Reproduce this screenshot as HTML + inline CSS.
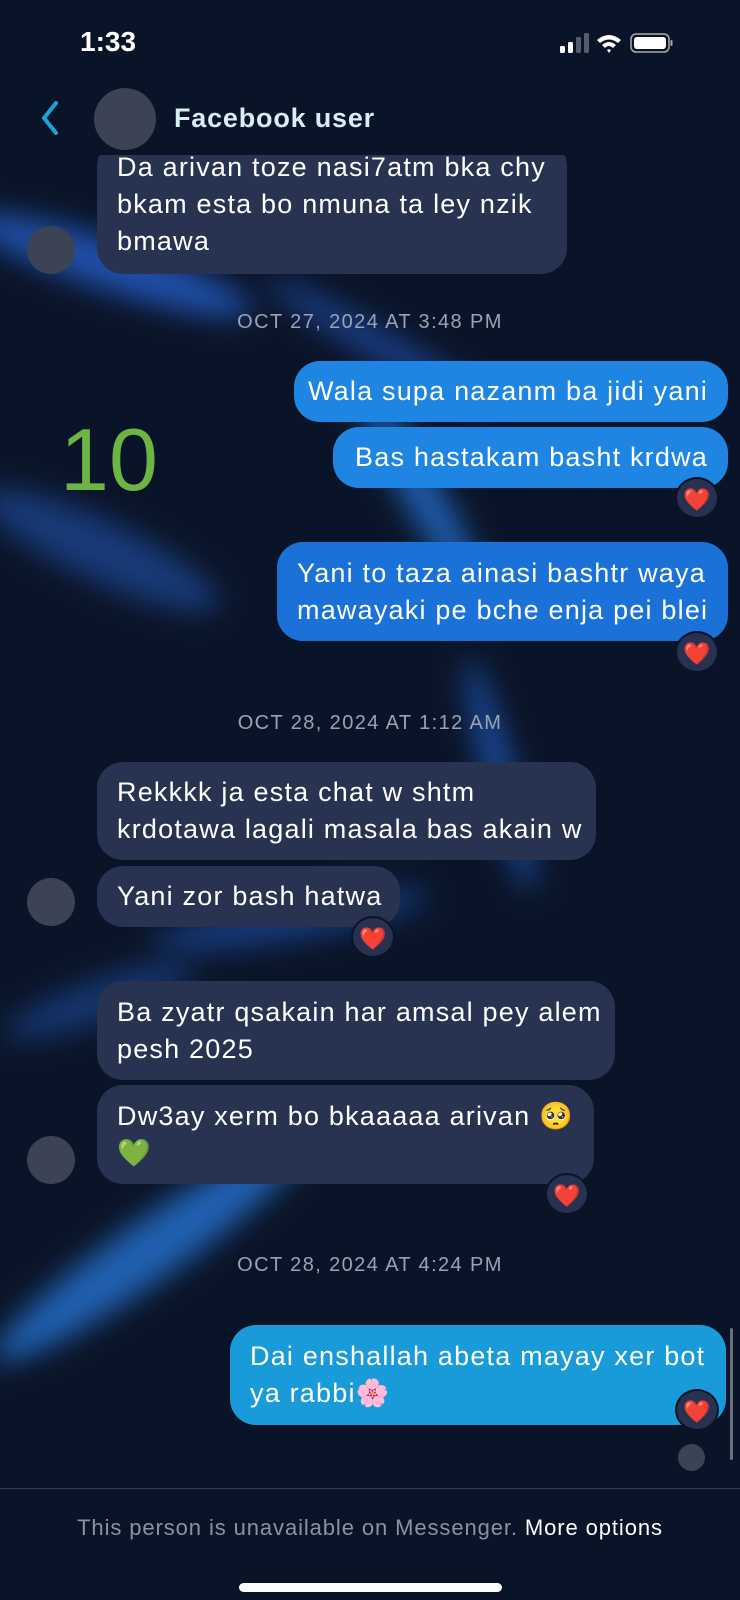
<!DOCTYPE html>
<html><head><meta charset="utf-8"><style>
*{margin:0;padding:0;box-sizing:border-box}
body{width:740px;height:1600px;overflow:hidden;background:#0a1428;font-family:"Liberation Sans",sans-serif;position:relative}
.bg{position:absolute;inset:0;overflow:hidden}
.s{position:absolute;border-radius:50%;filter:blur(14px)}
.a{position:absolute}
.b{position:absolute;border-radius:26px;color:#fff;font-size:27px;letter-spacing:1.2px;line-height:37px;padding:0 20px;display:flex;flex-direction:column;justify-content:center;white-space:nowrap}
.r{background:#273350}
.sb{background:#1e86e2}
.h{position:absolute;width:44px;height:42px;border-radius:50%;background:#263250;color:#e8222c;font-size:22px;text-align:center;line-height:42px;border:2px solid #0a1428;letter-spacing:0}
.av{position:absolute;width:48px;height:48px;border-radius:50%;background:#3b4354}
.ts{position:absolute;left:0;width:740px;text-align:center;color:#9aa3b3;font-size:20px;letter-spacing:1.4px}
</style></head><body>
<div class="bg">
<div class="s" style="left:-40px;top:240px;width:300px;height:50px;background:#1f4fa8;transform:rotate(18deg)"></div>
<div class="s" style="left:250px;top:330px;width:260px;height:30px;background:#1b3d86;transform:rotate(30deg)"></div>
<div class="s" style="left:300px;top:470px;width:240px;height:40px;background:#1f5aa8;transform:rotate(60deg)"></div>
<div class="s" style="left:-30px;top:520px;width:260px;height:60px;background:#183a78;transform:rotate(25deg)"></div>
<div class="s" style="left:380px;top:760px;width:240px;height:30px;background:#1a4a98;transform:rotate(75deg)"></div>
<div class="s" style="left:150px;top:900px;width:280px;height:40px;background:#173a7c;transform:rotate(-10deg)"></div>
<div class="s" style="left:-40px;top:1220px;width:380px;height:60px;background:#2060b0;transform:rotate(-35deg)"></div>
<div class="s" style="left:0;top:980px;width:200px;height:40px;background:#163670;transform:rotate(-20deg)"></div>
</div>

<div class="a" style="left:80px;top:26px;color:#fff;font-size:28px;font-weight:bold">1:33</div>
<svg class="a" style="left:560px;top:32px" width="135" height="22" viewBox="0 0 135 22">
<rect x="0" y="14" width="5" height="7" rx="1.5" fill="#fff"/><rect x="8" y="10" width="5" height="11" rx="1.5" fill="#fff"/><rect x="16" y="5" width="5" height="16" rx="1.5" fill="#555d6a"/><rect x="24" y="1" width="5" height="20" rx="1.5" fill="#555d6a"/>
<path d="M37 8 Q49 -2 61 8 L58 11 Q49 4 40 11 Z M42 13 Q49 7 56 13 L53 16 Q49 12 45 16 Z M47 18 L49 21 L51 18 Q49 16.5 47 18Z" fill="#fff"/>
<rect x="71" y="2" width="38" height="18" rx="5" fill="none" stroke="#aaa" stroke-width="1.5"/><rect x="74" y="5" width="32" height="12" rx="3" fill="#fff"/><rect x="110.5" y="8" width="2" height="6" rx="1" fill="#aaa"/>
</svg>

<div class="b r" style="left:97px;top:140px;width:470px;height:134px;justify-content:flex-end;padding-bottom:14px">Da arivan toze nasi7atm bka chy<br>bkam esta bo nmuna ta ley nzik<br>bmawa</div>
<div class="a" style="left:0;top:70px;width:740px;height:85px;background:#0a1428"></div>
<svg class="a" style="left:38px;top:100px" width="24" height="36"><path d="M18 3 L6 18 L18 33" fill="none" stroke="#19a4d8" stroke-width="4" stroke-linecap="round" stroke-linejoin="round"/></svg>
<div class="a" style="left:94px;top:88px;width:62px;height:62px;border-radius:50%;background:#3b4354"></div>
<div class="a" style="left:174px;top:103px;color:#d8eef5;font-size:27px;font-weight:bold;letter-spacing:0.8px">Facebook user</div>
<div class="av" style="left:27px;top:226px"></div>

<div class="ts" style="top:311px">OCT 27, 2024 AT 3:48 PM</div>
<div class="b sb" style="left:294px;top:361px;width:434px;height:61px;align-items:flex-end">Wala supa nazanm ba jidi yani</div>
<div class="b sb" style="left:333px;top:427px;width:395px;height:61px;align-items:flex-end">Bas hastakam basht krdwa</div>
<div class="h" style="left:675px;top:477px">❤️</div>
<div class="a" style="left:60px;top:410px;color:#6cb444;font-size:88px;line-height:100px">10</div>
<div class="b sb" style="left:277px;top:542px;width:451px;height:99px;background:#1a72d8">Yani to taza ainasi bashtr waya<br>mawayaki pe bche enja pei blei</div>
<div class="h" style="left:675px;top:631px">❤️</div>

<div class="ts" style="top:712px">OCT 28, 2024 AT 1:12 AM</div>
<div class="b r" style="left:97px;top:762px;width:499px;height:98px">Rekkkk ja esta chat w shtm<br>krdotawa lagali masala bas akain w</div>
<div class="b r" style="left:97px;top:866px;width:303px;height:61px">Yani zor bash hatwa</div>
<div class="h" style="left:351px;top:916px">❤️</div>
<div class="av" style="left:27px;top:878px"></div>

<div class="b r" style="left:97px;top:981px;width:518px;height:99px">Ba zyatr qsakain har amsal pey alem<br>pesh 2025</div>
<div class="b r" style="left:97px;top:1085px;width:497px;height:99px">Dw3ay xerm bo bkaaaaa arivan 🥺<br>💚</div>
<div class="h" style="left:545px;top:1173px">❤️</div>
<div class="av" style="left:27px;top:1136px"></div>

<div class="ts" style="top:1254px">OCT 28, 2024 AT 4:24 PM</div>
<div class="b sb" style="left:230px;top:1325px;width:496px;height:100px;background:#1a9bd9">Dai enshallah abeta mayay xer bot<br>ya rabbi🌸</div>
<div class="h" style="left:675px;top:1389px">❤️</div>
<div class="a" style="left:678px;top:1444px;width:27px;height:27px;border-radius:50%;background:#3b4354"></div>
<div class="a" style="left:730px;top:1328px;width:3px;height:132px;border-radius:2px;background:#6a7080"></div>

<div class="a" style="left:0;top:1488px;width:740px;height:1px;background:#353c4a"></div>
<div class="a" style="left:0;top:1515px;width:740px;text-align:center;color:#8a93a2;font-size:22px;letter-spacing:0.9px">This person is unavailable on Messenger. <span style="color:#fff">More options</span></div>
<div class="a" style="left:239px;top:1583px;width:263px;height:9px;border-radius:5px;background:#fff"></div>
</body></html>
